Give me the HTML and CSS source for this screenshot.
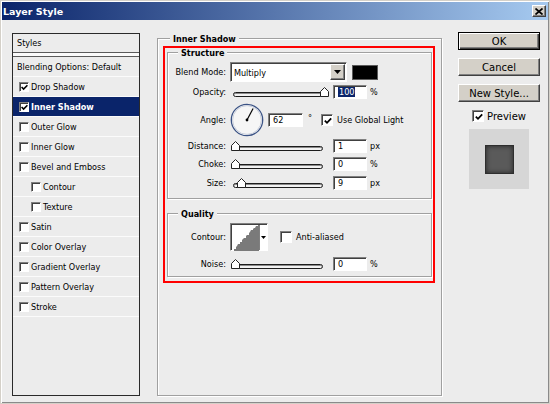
FILE: index.html
```html
<!DOCTYPE html>
<html lang="en">
<head>
<meta charset="UTF-8" />
<title>Layer Style</title>
<link rel="stylesheet" href="styles.css">
</head>
<body>
<div class="window">
  <div class="titlebar">
    <span class="title">Layer Style</span>
    <span class="close" aria-label="Close">
      <svg width="8" height="7" viewBox="0 0 8 7"><path d="M0.5 0.5 L7.5 6.5 M7.5 0.5 L0.5 6.5" stroke="#000" stroke-width="1.7"/></svg>
    </span>
  </div>

  <div class="content">
    <!-- effect list -->
    <ul class="styles-list">
      <li class="list-head">Styles</li>
      <li class="list-item blending">Blending Options: Default</li>
      <li class="list-item"><span class="cb"><svg width="7" height="7" viewBox="0 0 7 7"><path d="M0.6 3 L2.6 5 L6.4 1.2" fill="none" stroke="#000" stroke-width="1.6"/></svg></span>Drop Shadow</li>
      <li class="list-item selected"><span class="cb"><svg width="7" height="7" viewBox="0 0 7 7"><path d="M0.6 3 L2.6 5 L6.4 1.2" fill="none" stroke="#000" stroke-width="1.6"/></svg></span>Inner Shadow</li>
      <li class="list-item"><span class="cb"></span>Outer Glow</li>
      <li class="list-item"><span class="cb"></span>Inner Glow</li>
      <li class="list-item"><span class="cb"></span>Bevel and Emboss</li>
      <li class="list-item sub"><span class="cb"></span>Contour</li>
      <li class="list-item sub"><span class="cb"></span>Texture</li>
      <li class="list-item"><span class="cb"></span>Satin</li>
      <li class="list-item"><span class="cb"></span>Color Overlay</li>
      <li class="list-item"><span class="cb"></span>Gradient Overlay</li>
      <li class="list-item"><span class="cb"></span>Pattern Overlay</li>
      <li class="list-item"><span class="cb"></span>Stroke</li>
    </ul>

    <!-- settings for the selected effect -->
    <div class="group outer">
      <div class="group-title">Inner Shadow</div>
      <div class="highlight">
        <div class="group">
          <div class="group-title">Structure</div>
          <div class="fields">
            <div class="row h20">
              <span class="lbl">Blend Mode:</span>
              <span class="select">
                <span class="select-value">Multiply</span>
                <span class="select-btn"><svg width="7" height="4" viewBox="0 0 7 4"><path d="M0 0 H7 L3.5 4 Z" fill="#000"/></svg></span>
              </span>
              <span class="color"></span>
            </div>
            <div class="row h20">
              <span class="lbl">Opacity:</span>
              <span class="slider"><span class="track"></span><span class="thumb" style="left: 89px"><svg width="9" height="10" viewBox="0 0 9 10"><path d="M0.5 4.5 L4.5 0.5 L8.5 4.5 V9.5 H0.5 Z" fill="#fff" stroke="#222"/></svg></span></span>
              <span class="field"><span class="sel">100</span></span>
              <span class="unit">%</span>
            </div>
            <div class="row h36">
              <span class="lbl">Angle:</span>
              <svg class="dial" width="34" height="34" viewBox="0 0 34 34">
                <circle cx="17" cy="17" r="15.7" fill="#f6f6f6" stroke="#3b5385" stroke-width="1.3"/>
                <circle cx="17" cy="17" r="14.4" fill="none" stroke="#c8cedb" stroke-width="1"/>
                <line x1="17" y1="17" x2="23.1" y2="5.5" stroke="#000" stroke-width="1.2"/>
                <circle cx="17" cy="17" r="1.4" fill="#000"/>
              </svg>
              <span class="field angle">62</span>
              <span class="deg">°</span>
              <span class="cb lg"><svg width="8" height="8" viewBox="0 0 8 8"><path d="M0.8 3.6 L3 5.8 L7.2 1.4" fill="none" stroke="#000" stroke-width="1.8"/></svg></span>
              <span class="cb-text">Use Global Light</span>
            </div>
            <div class="row h16">
              <span class="lbl">Distance:</span>
              <span class="slider"><span class="track"></span><span class="thumb" style="left: 0px"><svg width="9" height="10" viewBox="0 0 9 10"><path d="M0.5 4.5 L4.5 0.5 L8.5 4.5 V9.5 H0.5 Z" fill="#fff" stroke="#222"/></svg></span></span>
              <span class="field">1</span>
              <span class="unit">px</span>
            </div>
            <div class="row h20">
              <span class="lbl">Choke:</span>
              <span class="slider"><span class="track"></span><span class="thumb" style="left: 0px"><svg width="9" height="10" viewBox="0 0 9 10"><path d="M0.5 4.5 L4.5 0.5 L8.5 4.5 V9.5 H0.5 Z" fill="#fff" stroke="#222"/></svg></span></span>
              <span class="field">0</span>
              <span class="unit">%</span>
            </div>
            <div class="row h18">
              <span class="lbl">Size:</span>
              <span class="slider"><span class="track"></span><span class="thumb" style="left: 6px"><svg width="9" height="10" viewBox="0 0 9 10"><path d="M0.5 4.5 L4.5 0.5 L8.5 4.5 V9.5 H0.5 Z" fill="#fff" stroke="#222"/></svg></span></span>
              <span class="field">9</span>
              <span class="unit">px</span>
            </div>
          </div>
        </div>

        <div class="group quality">
          <div class="group-title">Quality</div>
          <div class="fields q">
            <div class="row h28">
              <span class="lbl">Contour:</span>
              <span class="contour">
                <svg class="curve" width="27" height="26" viewBox="0 0 27 26">
                  <polygon points="2,26 2,24 4,24 4,22 5,21 6,19 8,19 8,17 10,17 10,15 11,14 12,13 14,13 14,11 15,10 17,10 17,8 18,7 19,5 21,5 21,4 22,3 23,3 24,1 26,1 26,0 27,0 27,26" fill="#7a7a7a"/>
                </svg>
                <span class="contour-drop"><svg width="5" height="3" viewBox="0 0 5 3"><path d="M0 0 H5 L2.5 3 Z" fill="#000"/></svg></span>
              </span>
              <span class="cb lg aa"></span>
              <span class="cb-text">Anti-aliased</span>
            </div>
            <div class="row h25">
              <span class="lbl">Noise:</span>
              <span class="slider"><span class="track"></span><span class="thumb" style="left: 0px"><svg width="9" height="10" viewBox="0 0 9 10"><path d="M0.5 4.5 L4.5 0.5 L8.5 4.5 V9.5 H0.5 Z" fill="#fff" stroke="#222"/></svg></span></span>
              <span class="field">0</span>
              <span class="unit">%</span>
            </div>
          </div>
        </div>
      </div>
    </div>

    <!-- dialog buttons and preview -->
    <div class="actions">
      <button class="btn default">OK</button>
      <button class="btn">Cancel</button>
      <button class="btn">New Style...</button>
      <div class="preview-toggle">
        <span class="cb lg"><svg width="8" height="8" viewBox="0 0 8 8"><path d="M0.8 3.6 L3 5.8 L7.2 1.4" fill="none" stroke="#000" stroke-width="1.8"/></svg></span>
        <span>Preview</span>
      </div>
      <div class="preview"><div class="preview-square"></div></div>
    </div>
  </div>
</div>
</body>
</html>
```

FILE: styles.css
```css
* {
  box-sizing: border-box;
}
body {
  margin: 0;
  background: #ececec;
  font-family: "DejaVu Sans Condensed", "DejaVu Sans", sans-serif;
  font-stretch: condensed;
  font-size: 9px;
  color: #000;
}
.window {
  width: 550px;
  height: 404px;
  padding: 1px;
  border: 1px solid #d4d0c8;
  box-shadow: inset 1px 1px #fff, inset -1px -1px #8a8a8a;
  background: #ececec;
}
.titlebar {
  height: 18px;
  display: flex;
  align-items: center;
  justify-content: space-between;
  padding: 0 2px 0 1px;
  background: linear-gradient(90deg, #0a246a, #a6caf0);
}
.title {
  color: #fff;
  font-family: "DejaVu Sans", sans-serif;
  font-stretch: normal;
  font-weight: bold;
  font-size: 9.5px;
}
.close {
  width: 14px;
  height: 12px;
  display: flex;
  align-items: center;
  justify-content: center;
  background: #d4d0c8;
  border: 1px solid;
  border-color: #fff #404040 #404040 #fff;
  box-shadow: inset -1px -1px #808080;
}
.content {
  display: flex;
  align-items: flex-start;
  padding: 13px 0 0 10px;
}

/* effect list */
.styles-list {
  list-style: none;
  margin: 0;
  padding: 0;
  width: 128px;
  height: 363px;
  border: 1px solid #2a2a2a;
  background: #ececec;
}
.list-head {
  height: 19px;
  line-height: 18px;
  padding-left: 4px;
  border-bottom: 1px solid #5a5a5a;
  box-shadow: 0 3px 0 #fafafa;
  margin-bottom: 3px;
}
.list-item {
  height: 20px;
  display: flex;
  align-items: center;
  padding-left: 6px;
  border-bottom: 1px solid #fbfbfb;
}
.list-item.blending {
  height: 21px;
  padding-left: 4px;
  border-top: 1px solid #5a5a5a;
}
.list-item.sub {
  padding-left: 18px;
}
.list-item.selected {
  background: #0a246a;
  color: #fff;
  font-weight: bold;
}

/* checkboxes */
.cb {
  width: 10px;
  height: 10px;
  flex: none;
  display: inline-flex;
  align-items: center;
  justify-content: center;
  margin-right: 2px;
  background: #fff;
  border: 1px solid;
  border-color: #808080 #fff #fff #808080;
  box-shadow: inset 1px 1px #404040;
}
.cb svg {
  margin: 1px 0 0 1px;
}
.cb.lg {
  width: 12px;
  height: 12px;
  margin-right: 3px;
}
.cb-text {
  margin-left: 1px;
}

/* group boxes */
.group {
  border: 1px solid #a0a0a0;
  box-shadow: inset 1px 1px #fff, 1px 1px #fff;
  width: 265px;
}
.group-title {
  width: fit-content;
  margin: -5px 0 0 10px;
  padding: 0 3px;
  line-height: 11px;
  background: #ececec;
  font-weight: bold;
}
.group.outer {
  width: 285px;
  height: 358px;
  margin: 5px 0 0 17px;
  padding: 0 5px;
}
.group.outer > .group-title {
  margin-left: 7px;
}
.highlight {
  width: 272px;
  margin-top: 1px;
  padding: 4px 0 4px 2px;
  border: 2px solid #f00;
}
.group.quality {
  margin-top: 14px;
}
.fields {
  padding: 3px 0 6px;
}
.fields.q {
  padding-bottom: 0;
}

/* form rows */
.row {
  display: flex;
  align-items: center;
}
.h16 { height: 16px; }
.h18 { height: 18px; }
.h20 { height: 20px; }
.h25 { height: 25px; }
.h28 { height: 28px; }
.h36 { height: 36px; }
.lbl {
  width: 58px;
  margin-right: 4px;
  text-align: right;
}
.select {
  width: 117px;
  height: 20px;
  display: flex;
  align-items: center;
  background: #fff;
  border: 1px solid;
  border-color: #808080 #fff #fff #808080;
  box-shadow: inset 1px 1px #404040;
}
.select-value {
  flex: 1;
  padding: 1px 0 0 3px;
}
.select-btn {
  width: 15px;
  height: 16px;
  margin-right: 1px;
  display: flex;
  align-items: center;
  justify-content: center;
  background: #d4d0c8;
  border: 1px solid;
  border-color: #fff #404040 #404040 #fff;
  box-shadow: inset -1px -1px #808080;
}
.color {
  width: 26px;
  height: 15px;
  margin-left: 5px;
  background: #000;
  border: 1px solid #5a5a5a;
}
.slider {
  position: relative;
  width: 98px;
  height: 10px;
  margin-left: 1px;
  padding-top: 5px;
}
.track {
  display: block;
  height: 5px;
  margin: 0 6px 0 2px;
  border: 1px solid #1c1c1c;
  border-radius: 3px;
  background: #f2f2f2;
  box-shadow: inset 0 1px #8a8a8a;
}
.thumb {
  position: absolute;
  top: 0;
  width: 9px;
  height: 10px;
}
.thumb svg {
  display: block;
}
.field {
  width: 34px;
  height: 14px;
  margin-left: 4px;
  padding: 1px 0 0 4px;
  line-height: 11px;
  background: #fff;
  border: 1px solid;
  border-color: #808080 #fff #fff #808080;
  box-shadow: inset 1px 1px #404040;
}
.field.angle {
  width: 35px;
}
.sel {
  background: #0a246a;
  color: #fff;
  padding: 0 1px;
}
.unit {
  margin-left: 3px;
}
.dial {
  display: block;
}
.deg {
  margin: -5px 0 0 5px;
}
.deg + .cb {
  margin-left: 9px;
}
.contour {
  width: 38px;
  height: 28px;
  display: flex;
  background: #fff;
  border: 1px solid;
  border-color: #808080 #fff #fff #808080;
  box-shadow: inset 1px 1px #404040;
}
.curve {
  display: block;
  margin: 1px 0 0 1px;
}
.contour-drop {
  flex: 1;
  display: flex;
  align-items: center;
  justify-content: center;
  border-left: 1px solid #808080;
  margin: 1px 0 0;
}
.cb.aa {
  margin-left: 12px;
}

/* dialog buttons */
.actions {
  width: 82px;
  margin: -1px 0 0 16px;
  display: flex;
  flex-direction: column;
  align-items: center;
  font-family: "DejaVu Sans", sans-serif;
  font-stretch: normal;
  font-size: 10px;
}
.btn {
  width: 82px;
  height: 18px;
  padding: 0;
  display: flex;
  align-items: center;
  justify-content: center;
  font: inherit;
  color: #000;
  background: #d4d0c8;
  border: 1px solid;
  border-color: #fff #404040 #404040 #fff;
  box-shadow: inset -1px -1px #808080;
}
.btn + .btn {
  margin-top: 8px;
}
.btn.default {
  border-color: #000;
  box-shadow: inset 1px 1px #fff, inset -1px -1px #404040, inset -2px -2px #808080;
}
.preview-toggle {
  height: 12px;
  margin-top: 8px;
  display: flex;
  align-items: center;
}
.preview {
  width: 60px;
  height: 60px;
  margin-top: 7px;
  display: flex;
  align-items: center;
  justify-content: center;
  background: #d6d6d6;
}
.preview-square {
  width: 29px;
  height: 29px;
  background: #5a5a5a;
  border: 1px solid #2e2e2e;
  box-shadow: inset 0 0 5px #262626;
}
```
